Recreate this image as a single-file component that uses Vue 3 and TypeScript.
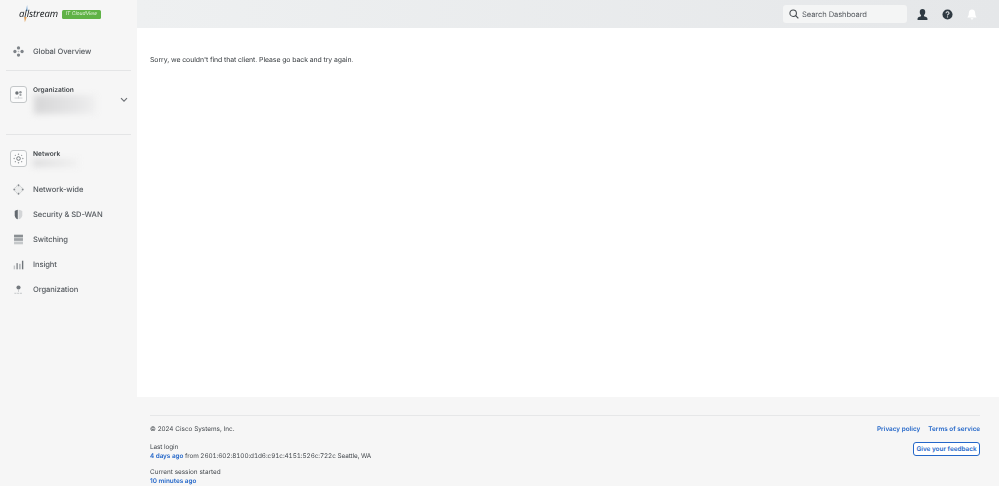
<script setup lang="ts">
const navItems = [
  { key: 'wide', label: 'Network-wide' },
  { key: 'sec', label: 'Security & SD-WAN' },
  { key: 'sw', label: 'Switching' },
  { key: 'ins', label: 'Insight' },
  { key: 'org', label: 'Organization' },
]
</script>

<template>
  <div class="page">
    <aside class="side">
      <div class="logo">
        <svg class="swoosh" width="6" height="18" viewBox="0 0 8 24"><path d="M5.5 0 L6.5 8 L3.5 8 Z" fill="#8fb4d8"/><path d="M1.5 16 L5 16 L2.5 23 Z" fill="#e2a15a"/></svg>
        <span class="brand">allstream</span>
        <span class="tag">IT CloudView</span>
      </div>
      <div class="nav-row global">
        <svg class="ico" viewBox="0 0 16 16"><g fill="#7f8489"><circle cx="8" cy="2.8" r="2.4"/><circle cx="2.8" cy="8" r="2.4"/><circle cx="13.2" cy="8" r="2.4"/><circle cx="8" cy="13.2" r="2.4"/></g><circle cx="8" cy="8" r="1.2" fill="#b5b8bb"/></svg>
        <span>Global Overview</span>
      </div>
      <div class="rule r1"></div>
      <div class="ctx org">
        <div class="box">
          <svg viewBox="0 0 14 14"><circle cx="5" cy="5" r="2.2" fill="#6f7478"/><circle cx="9.5" cy="4" r="1.6" fill="#94989c"/><circle cx="9.5" cy="7.5" r="1.4" fill="#a2a6a9"/><path d="M2 11.5h10M7 9v3" stroke="#c3c6c8" fill="none"/></svg>
        </div>
        <div class="ctx-text">
          <div class="ctx-title">Organization</div>
          <div class="blur b1"></div>
        </div>
        <svg class="chev" width="8" height="6" viewBox="0 0 8 6"><path d="M1 1.2 L4 4.2 L7 1.2" fill="none" stroke="#6c7075" stroke-width="1.1"/></svg>
      </div>
      <div class="rule r2"></div>
      <div class="ctx net">
        <div class="box">
          <svg viewBox="0 0 14 14"><circle cx="7" cy="7" r="2.3" fill="none" stroke="#6f7478" stroke-width="1.2"/><g fill="#8f9396"><circle cx="7" cy="1.5" r=".9"/><circle cx="7" cy="12.5" r=".9"/><circle cx="1.5" cy="7" r=".9"/><circle cx="12.5" cy="7" r=".9"/><circle cx="3" cy="3" r=".8"/><circle cx="11" cy="3" r=".8"/><circle cx="3" cy="11" r=".8"/><circle cx="11" cy="11" r=".8"/></g></svg>
        </div>
        <div class="ctx-text">
          <div class="ctx-title">Network</div>
          <div class="blur b2"></div>
        </div>
      </div>
      <nav class="nav">
        <div v-for="item in navItems" :key="item.key" class="nav-row">
          <svg class="ico" viewBox="0 0 16 16">
            <g v-if="item.key === 'wide'"><circle cx="8" cy="8" r="5.5" fill="#eceded" stroke="#a9adb0" stroke-dasharray="1.5 1.2"/><g fill="#85898d"><circle cx="8" cy="1.8" r="1.3"/><circle cx="8" cy="14.2" r="1.3"/><circle cx="1.8" cy="8" r="1.3"/><circle cx="14.2" cy="8" r="1.3"/></g></g>
            <g v-else-if="item.key === 'sec'"><path d="M7 1 C5 1.5 3.5 2 2.5 3 V9 C2.5 12 5 14.5 7 15 Z" fill="#63696f"/><path d="M8 1 C10.5 1.5 12.5 2 13.5 3 V9 C13.5 12 10.5 14.5 8 15 Z" fill="#d3d5d7"/></g>
            <g v-else-if="item.key === 'sw'"><rect x="1.5" y="1" width="13" height="4" fill="#8a8f93"/><rect x="1.5" y="6" width="13" height="4" fill="#a0a4a8"/><rect x="1.5" y="11" width="13" height="4" fill="#c5c8ca"/></g>
            <g v-else-if="item.key === 'ins'"><rect x="1" y="9.5" width="2" height="5.5" fill="#c0c3c5"/><rect x="5" y="6" width="2" height="9" fill="#85898d"/><rect x="9" y="7" width="2" height="8" fill="#a5a9ac"/><rect x="13" y="2.5" width="2" height="12.5" fill="#6f757a"/></g>
            <g v-else><circle cx="8" cy="5" r="3" fill="#74797e"/><path d="M8 8v3.5" stroke="#b9bcbf" fill="none"/><path d="M2 13.5h12" stroke="#c3c6c8" stroke-width="1.4" stroke-dasharray="3 1" fill="none"/></g>
          </svg>
          <span>{{ item.label }}</span>
        </div>
      </nav>
    </aside>
    <div class="main">
      <header class="top">
        <div class="search">
          <svg width="10" height="10" viewBox="0 0 12 12"><circle cx="5" cy="5" r="3.9" fill="none" stroke="#44494e" stroke-width="1.3"/><path d="M8 8 L11.2 11.2" stroke="#44494e" stroke-width="1.4"/></svg>
          <span>Search Dashboard</span>
        </div>
        <svg class="ti user" width="11" height="11" viewBox="0 0 12 12"><path d="M6 0C4 0 3 1.4 3 3.2 3 5 3.8 6.2 4.5 6.8 L4.3 7.8 C2.5 8.3.8 9 .6 10.3 L.6 12 H11.4 V10.3 C11.2 9 9.5 8.3 7.7 7.8 L7.5 6.8 C8.2 6.2 9 5 9 3.2 9 1.4 8 0 6 0Z" fill="#2f3a42"/></svg>
        <svg class="ti help" width="11" height="11" viewBox="0 0 12 12"><circle cx="6" cy="6" r="5.5" fill="#2f3a42"/><path d="M4.3 4.6C4.4 3.6 5.1 3.1 6 3.1 7 3.1 7.7 3.7 7.7 4.5 7.7 5.6 6 5.7 6 7" fill="none" stroke="#e6e8ea" stroke-width="1.1"/><circle cx="6" cy="8.7" r=".7" fill="#e6e8ea"/></svg>
        <svg class="ti bell" width="10" height="11" viewBox="0 0 11 12"><path d="M5.5 .5C3.2.5 2 2.2 2 4.4 2 6.8 1.4 8 .4 9.2 H10.6 C9.6 8 9 6.8 9 4.4 9 2.2 7.8.5 5.5.5Z" fill="#fff"/><path d="M4 10.2 H7 C6.9 11.2 6.2 11.6 5.5 11.6 4.8 11.6 4.1 11.2 4 10.2Z" fill="#fff"/></svg>
      </header>
      <main class="content">
        <p>Sorry, we couldn't find that client. Please go back and try again.</p>
      </main>
      <footer class="foot">
        <div class="foot-rule"></div>
        <div class="foot-cols">
          <div class="foot-left">
            <div class="copy">© 2024 Cisco Systems, Inc.</div>
            <div class="login">Last login<br><a>4 days ago</a> from 2601:602:8100:d1d6:c91c:4151:526c:722c Seattle, WA</div>
            <div class="session">Current session started<br><a>10 minutes ago</a></div>
          </div>
          <div class="foot-right">
            <div class="links"><a>Privacy policy</a><a>Terms of service</a></div>
            <button class="fb">Give your feedback</button>
          </div>
        </div>
      </footer>
    </div>
  </div>
</template>

<style>
html, body { margin: 0; height: 100%; overflow: hidden; }
</style>

<style scoped>
.page { display: flex; width: 999px; height: 486px; overflow: hidden; font-family: Inter, "Liberation Sans", sans-serif; background: #f6f6f6; color: #3c4146; text-rendering: geometricPrecision; }
.side { width: 137px; flex: none; display: flex; flex-direction: column; background: #f6f6f6; }
.logo { height: 28px; display: flex; align-items: center; padding-left: 19px; position: relative; }
.swoosh { position: absolute; left: 23px; top: 5px; }
.brand { font-family: "Open Sans", sans-serif; font-style: italic; font-size: 9.6px; letter-spacing: -.1px; color: #14181b; position: relative; width: 43px; flex: none; top: -1px; will-change: transform; }
.tag { width: 39px; height: 9px; line-height: 9px; flex: none; background: #5fb246; color: #eaf7e4; font-size: 5px; font-style: italic; text-align: center; white-space: nowrap; border-radius: 1.5px; will-change: transform; }
.nav-row { display: flex; align-items: center; height: 25px; padding-left: 13px; gap: 9px; font-size: 7.6px; letter-spacing: -.1px; font-weight: 500; color: #565b60; white-space: nowrap; }
.nav-row span { will-change: transform; }
.ico { width: 11px; height: 11px; flex: none; }
.global { margin-top: 11px; }
.rule { height: 1px; background: #e4e5e6; margin: 0 6px 0 6px; }
.r1 { margin-top: 6px; }
.ctx { display: flex; position: relative; padding-left: 10px; }
.org { margin-top: 14px; height: 49px; }
.net { margin-top: 14px; height: 25px; }
.box { width: 15px; height: 15px; border: 1px solid #c4c7c9; border-radius: 3px; display: flex; align-items: center; justify-content: center; flex: none; margin-top: 1px; background: #fbfbfb; }
.box svg { width: 11px; height: 11px; }
.ctx-text { margin-left: 6px; padding-top: 1px; }
.ctx-title { font-size: 6.6px; font-weight: 600; color: #33383c; line-height: 9px; will-change: transform; }
.blur { filter: blur(3px); }
.b1 { width: 62px; height: 19px; margin-left: 1px; background: linear-gradient(90deg, #d6d6d7, #e6e6e7 70%, #f0f0f0); }
.b2 { width: 46px; height: 8px; background: linear-gradient(90deg, #dcdcdd, #ececec 80%, #f3f3f3); }
.chev { position: absolute; left: 120px; top: 12px; }
.nav { display: flex; flex-direction: column; margin-top: 3px; }
.main { flex: 1; min-width: 0; display: flex; flex-direction: column; }
.top { height: 28px; flex: none; display: flex; align-items: center; background: linear-gradient(90deg, #eef0f1, #e5e7e9); padding-left: 646px; }
.search { width: 124px; height: 18px; background: #f4f5f5; border-radius: 3px; display: flex; align-items: center; gap: 3px; padding-left: 6px; box-sizing: border-box; font-size: 7.6px; letter-spacing: -.1px; color: #565b60; white-space: nowrap; }
.search span { will-change: transform; }
.ti { flex: none; }
.user { margin-left: 10px; }
.help { margin-left: 14px; }
.bell { margin-left: 14px; }
.content { height: 369px; flex: none; background: #fff; padding: 27px 13px 0; box-sizing: border-box; }
.content p { margin: 0; font-size: 6.9px; letter-spacing: -.07px; line-height: 9px; color: #33383c; will-change: transform; }
.foot { flex: 1; padding: 18px 19px 0 13px; font-size: 6.4px; line-height: 9px; color: #44494e; }
.foot-rule { height: 1px; background: #e6e7e8; }
.foot-cols { display: flex; justify-content: space-between; padding-top: 9px; }
.foot-left > div { white-space: nowrap; will-change: transform; }
.login { margin-top: 9px; font-variant-numeric: tabular-nums; letter-spacing: -.07px; }
.session { margin-top: 7px; }
a { color: #2467c9; font-weight: 600; }
.foot-right { display: flex; flex-direction: column; align-items: flex-end; }
.links { display: flex; gap: 8px; will-change: transform; }
.fb { margin-top: 8px; width: 67px; height: 14px; padding: 0; border: 1.3px solid #2467c9; border-radius: 3px; background: #fff; color: #2467c9; font: 600 6.4px Inter, "Liberation Sans", sans-serif; text-rendering: geometricPrecision; }
</style>
